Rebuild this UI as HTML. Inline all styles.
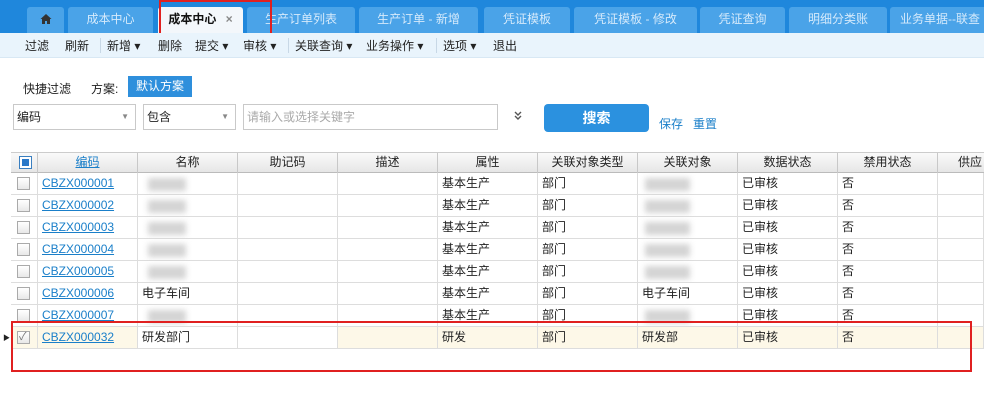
<!DOCTYPE html>
<html><head><meta charset="utf-8"><style>
*{margin:0;padding:0;box-sizing:border-box}
body{width:984px;height:406px;overflow:hidden;background:#fff;font-family:"Liberation Sans","Noto Sans CJK SC",sans-serif;font-size:12px;color:#222;position:relative}
.abs{position:absolute}
.tabbar{left:0;top:0;width:984px;height:33px;background:#1f87dc}
.tab{position:absolute;top:7px;height:26px;background:#4aa3e8;color:#d5eafb;border-radius:3px 3px 0 0;font-size:12px;line-height:24px;text-align:center}
.tab.act{background:#f3f7fb;color:#111;font-weight:bold}
.tb{left:0;top:33px;width:984px;height:25px;background:#e9f4fc;border-bottom:1px solid #d8e8f4}
.tb span{position:absolute;top:4px;font-size:12px;color:#222}
.tb i{position:absolute;top:5px;width:1px;height:15px;background:#c8d8e6}
.inp{position:absolute;height:26px;border:1px solid #c9c9c9;background:#fff;line-height:24px;padding-left:3px;font-size:12px}
.hdr{left:11px;top:152px;width:973px;height:21px;background:linear-gradient(#fafafa,#e6e6e6);border-top:1px solid #ccc;border-bottom:1px solid #bbb}
.c{position:absolute;height:22px;line-height:21px;border-right:1px solid #ddd;border-bottom:1px solid #ddd;padding-left:4px;white-space:nowrap;overflow:hidden}
.h{position:absolute;top:0;height:20px;line-height:19px;text-align:center;border-right:1px solid #c8c8c8}
.lnk{color:#1a7fc9;text-decoration:underline}
.cb{position:absolute;left:6px;top:4px;width:13px;height:13px;border:1px solid #aaa;background:linear-gradient(#fff,#e8e8e8)}
.blur{position:absolute;background:#d4d4d4;filter:blur(3px)}
</style></head><body>
<div class="abs tabbar"></div>
<div class="tab" style="left:27px;width:37px"><svg width="12" height="12" viewBox="0 0 12 12" style="margin-top:6px"><path d="M6 1L0.5 6H2V11H5V8H7V11H10V6H11.5Z" fill="#333"/></svg></div>
<div class="tab" style="left:68px;width:85px">成本中心</div>
<div class="tab act" style="left:158px;width:85px">成本中心 <span style="color:#888;margin-left:6px">×</span></div>
<div class="tab" style="left:247px;width:108px">生产订单列表</div>
<div class="tab" style="left:359px;width:119px">生产订单 - 新增</div>
<div class="tab" style="left:484px;width:86px">凭证模板</div>
<div class="tab" style="left:574px;width:123px">凭证模板 - 修改</div>
<div class="tab" style="left:700px;width:85px">凭证查询</div>
<div class="tab" style="left:789px;width:98px">明细分类账</div>
<div class="tab" style="left:890px;width:100px">业务单据--联查</div>
<div class="abs" style="left:159px;top:0;width:113px;height:42px;border:2px solid #e02020"></div>
<div class="abs tb">
<span style="left:25px">过滤</span><span style="left:65px">刷新</span><i style="left:100px"></i>
<span style="left:107px">新增 ▾</span><span style="left:158px">删除</span><span style="left:195px">提交 ▾</span><span style="left:243px">审核 ▾</span><i style="left:288px"></i>
<span style="left:295px">关联查询 ▾</span><span style="left:366px">业务操作 ▾</span><i style="left:436px"></i><span style="left:443px">选项 ▾</span><span style="left:493px">退出</span>
</div>
<div class="abs" style="left:23px;top:80px">快捷过滤</div>
<div class="abs" style="left:91px;top:80px">方案:</div>
<div class="abs" style="left:128px;top:76px;width:64px;height:21px;background:#2e8fdc;color:#fff;text-align:center;line-height:21px">默认方案</div>
<div class="inp" style="left:13px;top:104px;width:123px">编码<span style="position:absolute;right:6px;color:#888;font-size:8px">▼</span></div>
<div class="inp" style="left:143px;top:104px;width:93px">包含<span style="position:absolute;right:6px;color:#888;font-size:8px">▼</span></div>
<div class="inp" style="left:243px;top:104px;width:255px;color:#aaa">请输入或选择关键字</div>
<svg class="abs" style="left:513px;top:111px" width="10" height="10" viewBox="0 0 10 10"><path d="M2 1L5 4L8 1M2 5L5 8L8 5" stroke="#555" stroke-width="1.4" fill="none"/></svg>
<div class="abs" style="left:544px;top:104px;width:105px;height:28px;background:#2b91df;border-radius:4px;color:#fff;font-size:14px;font-weight:bold;text-align:center;line-height:28px">搜索</div>
<div class="abs" style="left:659px;top:115px;color:#1a7fc9">保存</div>
<div class="abs" style="left:693px;top:115px;color:#1a7fc9">重置</div>

<div class="abs hdr">
<div class="h" style="left:0;width:27px"><div style="position:absolute;left:8px;top:3px;width:13px;height:13px;border:1px solid #3a7fc0;background:#fff"><div style="margin:2px;width:7px;height:7px;background:#2a78c8"></div></div></div>
<div class="h lnk" style="left:27px;width:100px">编码</div>
<div class="h" style="left:127px;width:100px">名称</div>
<div class="h" style="left:227px;width:100px">助记码</div>
<div class="h" style="left:327px;width:100px">描述</div>
<div class="h" style="left:427px;width:100px">属性</div>
<div class="h" style="left:527px;width:100px">关联对象类型</div>
<div class="h" style="left:627px;width:100px">关联对象</div>
<div class="h" style="left:727px;width:100px">数据状态</div>
<div class="h" style="left:827px;width:100px">禁用状态</div>
<div class="h" style="left:927px;width:60px;text-align:left;padding-left:20px">供应</div>
</div>
<div id="rows"></div>
<script>
var d=[["CBZX000001","","基本生产",""],["CBZX000002","","基本生产",""],["CBZX000003","","基本生产",""],["CBZX000004","","基本生产",""],["CBZX000005","","基本生产",""],["CBZX000006","电子车间","基本生产","电子车间"],["CBZX000007","","基本生产",""],["CBZX000032","研发部门","研发","研发部"]];
var h="";
d.forEach(function(r,i){var y=173+i*22;var bg=i==7?"#fdf8e8":"#fff";
var xs=[11,38,138,238,338,438,538,638,738,838,938];
var vals=["",'<span class="lnk">'+r[0]+'</span>',r[1],"","",r[2],"部门",r[3],"已审核","否",""];
for(var k=0;k<11;k++){var w=(k==10?46:xs[k+1]-xs[k]);var bgc=(i==7&&(k==3||k==2))?"#fff":bg;
h+='<div class="c" style="left:'+xs[k]+'px;top:'+y+'px;width:'+w+'px;background:'+bgc+'">'+(k==0?'<div class="cb">'+(i==7?'<span style="position:absolute;left:1px;top:-5px;color:#777;font-size:11px">✓</span>':'')+'</div>':vals[k])+'</div>';}
if(!r[1]){h+='<div class="blur" style="left:148px;top:'+(y+5)+'px;width:38px;height:13px"></div><div class="blur" style="left:645px;top:'+(y+5)+'px;width:45px;height:13px"></div>';}
});
h+='<div class="abs" style="left:3px;top:333px;font-size:7px">▶</div>';
document.getElementById("rows").innerHTML=h;
</script>
<div class="abs" style="left:11px;top:321px;width:961px;height:51px;border:2px solid #e02020"></div>
</body></html>
